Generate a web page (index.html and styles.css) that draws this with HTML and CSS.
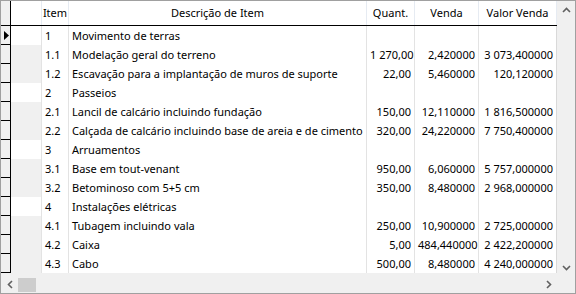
FILE: index.html
```html
<!DOCTYPE html>
<html lang="pt">
<head>
<meta charset="utf-8">
<title>Grelha</title>
<link rel="stylesheet" href="styles.css">
</head>
<body>
<div class="window">
  <div class="top">
    <div class="table">
      <div class="row head">
        <div class="ind"></div>
        <div class="c c0"></div>
        <div class="c c1 hc">Item</div>
        <div class="c c2 hc">Descrição de Item</div>
        <div class="c c3 hc">Quant.</div>
        <div class="c c4 hc">Venda</div>
        <div class="c c5 hc">Valor Venda</div>
      </div>
      <div class="row">
        <div class="ind"><svg width="5" height="9" viewBox="0 0 5 9"><path d="M0 0 L5 4.5 L0 9 Z" fill="#000"/></svg></div>
        <div class="c c0"></div><div class="c c1">1</div><div class="c c2">Movimento de terras</div>
        <div class="c c3"></div><div class="c c4"></div><div class="c c5"></div>
      </div>
      <div class="row">
        <div class="ind"></div>
        <div class="c c0 sub"></div><div class="c c1">1.1</div><div class="c c2">Modelação geral do terreno</div>
        <div class="c c3 n">1 270,00</div><div class="c c4 n">2,420000</div><div class="c c5 n">3 073,400000</div>
      </div>
      <div class="row">
        <div class="ind"></div>
        <div class="c c0 sub"></div><div class="c c1">1.2</div><div class="c c2">Escavação para a implantação de muros de suporte</div>
        <div class="c c3 n">22,00</div><div class="c c4 n">5,460000</div><div class="c c5 n">120,120000</div>
      </div>
      <div class="row">
        <div class="ind"></div>
        <div class="c c0"></div><div class="c c1">2</div><div class="c c2">Passeios</div>
        <div class="c c3"></div><div class="c c4"></div><div class="c c5"></div>
      </div>
      <div class="row">
        <div class="ind"></div>
        <div class="c c0 sub"></div><div class="c c1">2.1</div><div class="c c2">Lancil de calcário incluindo fundação</div>
        <div class="c c3 n">150,00</div><div class="c c4 n">12,110000</div><div class="c c5 n">1 816,500000</div>
      </div>
      <div class="row">
        <div class="ind"></div>
        <div class="c c0 sub"></div><div class="c c1">2.2</div><div class="c c2">Calçada de calcário incluindo base de areia e de cimento</div>
        <div class="c c3 n">320,00</div><div class="c c4 n">24,220000</div><div class="c c5 n">7 750,400000</div>
      </div>
      <div class="row">
        <div class="ind"></div>
        <div class="c c0"></div><div class="c c1">3</div><div class="c c2">Arruamentos</div>
        <div class="c c3"></div><div class="c c4"></div><div class="c c5"></div>
      </div>
      <div class="row">
        <div class="ind"></div>
        <div class="c c0 sub"></div><div class="c c1">3.1</div><div class="c c2">Base em tout-venant</div>
        <div class="c c3 n">950,00</div><div class="c c4 n">6,060000</div><div class="c c5 n">5 757,000000</div>
      </div>
      <div class="row">
        <div class="ind"></div>
        <div class="c c0 sub"></div><div class="c c1">3.2</div><div class="c c2">Betominoso com 5+5 cm</div>
        <div class="c c3 n">350,00</div><div class="c c4 n">8,480000</div><div class="c c5 n">2 968,000000</div>
      </div>
      <div class="row">
        <div class="ind"></div>
        <div class="c c0"></div><div class="c c1">4</div><div class="c c2">Instalações elétricas</div>
        <div class="c c3"></div><div class="c c4"></div><div class="c c5"></div>
      </div>
      <div class="row">
        <div class="ind"></div>
        <div class="c c0 sub"></div><div class="c c1">4.1</div><div class="c c2">Tubagem incluindo vala</div>
        <div class="c c3 n">250,00</div><div class="c c4 n">10,900000</div><div class="c c5 n">2 725,000000</div>
      </div>
      <div class="row">
        <div class="ind"></div>
        <div class="c c0 sub"></div><div class="c c1">4.2</div><div class="c c2">Caixa</div>
        <div class="c c3 n">5,00</div><div class="c c4 n">484,440000</div><div class="c c5 n">2 422,200000</div>
      </div>
      <div class="row">
        <div class="ind"></div>
        <div class="c c0 sub"></div><div class="c c1">4.3</div><div class="c c2">Cabo</div>
        <div class="c c3 n">500,00</div><div class="c c4 n">8,480000</div><div class="c c5 n">4 240,000000</div>
      </div>
    </div>
    <div class="vscroll">
      <div class="arrow"><svg width="9" height="6" viewBox="0 0 9 6"><path d="M1 5 L4.5 1.5 L8 5" fill="none" stroke="#606060" stroke-width="1.6"/></svg></div>
      <div class="track"></div>
      <div class="arrow"><svg width="9" height="6" viewBox="0 0 9 6"><path d="M1 1 L4.5 4.5 L8 1" fill="none" stroke="#606060" stroke-width="1.6"/></svg></div>
    </div>
  </div>
  <div class="bottom">
    <div class="hscroll">
      <div class="harrow"><svg width="6" height="9" viewBox="0 0 6 9"><path d="M5 1 L1.5 4.5 L5 8" fill="none" stroke="#606060" stroke-width="1.6"/></svg></div>
      <div class="htrack"><div class="thumb"></div></div>
      <div class="harrow"><svg width="6" height="9" viewBox="0 0 6 9"><path d="M1 1 L4.5 4.5 L1 8" fill="none" stroke="#606060" stroke-width="1.6"/></svg></div>
    </div>
    <div class="corner"></div>
  </div>
</div>
</body>
</html>
```
FILE: styles.css
```css
html, body {
  margin: 0;
  padding: 0;
  background: #ffffff;
}
.window {
  width: 576px;
  height: 294px;
  box-sizing: border-box;
  border: 1px solid #a0a0a0;
  display: flex;
  flex-direction: column;
  font-family: "Noto Sans", "Open Sans", sans-serif;
  font-size: 11px;
  color: #000000;
  background: #f0f0f0;
}
.top {
  display: flex;
  height: 275px;
}
.table {
  width: 556px;
  display: flex;
  flex-direction: column;
  background: #f0f0f0;
}
.row {
  display: flex;
  height: 19px;
  flex: none;
}
.row.head {
  height: 25px;
  border-bottom: 1px solid #000000;
  box-sizing: border-box;
  background: #ffffff;
}
.ind {
  width: 10px;
  box-sizing: border-box;
  border-right: 1px solid #000000;
  border-bottom: 1px solid #000000;
  background: #f0f0f0;
  display: flex;
  align-items: center;
  padding-left: 3px;
}
.head .ind {
  border-bottom: none;
}
.c {
  box-sizing: border-box;
  border-right: 1px solid #e3e3e3;
  background: #ffffff;
  white-space: nowrap;
  overflow: hidden;
  line-height: 19px;
  padding: 0 3px;
}
.head .c {
  line-height: 24px;
  padding: 0;
  border-right-color: #e6ebf2;
}
.hc {
  text-align: center;
}
.c0 { width: 31px; }
.c1 { width: 27px; }
.c2 { width: 298px; }
.c3 { width: 48px; }
.c4 { width: 64px; }
.c5 { width: 78px; border-right-color: #d9d9d9; }
.sub { background: #f0f0f0; }
.n { text-align: right; }
.vscroll {
  width: 18px;
  display: flex;
  flex-direction: column;
  background: #f0f0f0;
}
.arrow {
  height: 17px;
  display: flex;
  align-items: center;
  justify-content: center;
}
.track { flex: 1; }
.bottom {
  display: flex;
  height: 17px;
}
.hscroll {
  width: 556px;
  display: flex;
  background: #f0f0f0;
}
.harrow {
  width: 17px;
  display: flex;
  align-items: center;
  justify-content: center;
}
.htrack {
  flex: 1;
  display: flex;
}
.thumb {
  width: 18px;
  margin: 2px 0 1px;
  background: #cdcdcd;
}
.corner {
  width: 18px;
  background: #f0f0f0;
}
```
